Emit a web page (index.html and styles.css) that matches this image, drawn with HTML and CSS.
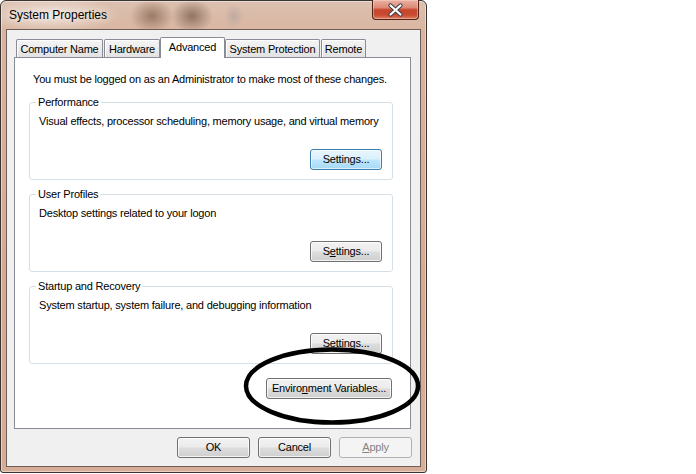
FILE: index.html
```html
<!DOCTYPE html>
<html>
<head>
<meta charset="utf-8">
<link rel="stylesheet" href="styles.css">
</head>
<body>
<div class="window">
  <div class="titlebar">
    <span class="title">System Properties</span>
    <div class="close">
      <svg width="45" height="18" viewBox="0 0 45 18">
        <path d="M17.5 4.5 L27.5 13.5 M27.5 4.5 L17.5 13.5" stroke="#3a3f4a" stroke-width="4.2" stroke-linecap="round"/>
        <path d="M17.5 4.5 L27.5 13.5 M27.5 4.5 L17.5 13.5" stroke="#ffffff" stroke-width="2.2" stroke-linecap="round"/>
      </svg>
    </div>
  </div>
  <div class="client">
    <div class="tabs">
      <div class="tab tab-cn">Computer Name</div>
      <div class="tab tab-hw">Hardware</div>
      <div class="tab tab-adv active">Advanced</div>
      <div class="tab tab-sp">System Protection</div>
      <div class="tab tab-rm">Remote</div>
    </div>
    <div class="panel">
      <p class="intro">You must be logged on as an Administrator to make most of these changes.</p>
      <div class="group first">
        <span class="legend">Performance</span>
        <p class="desc">Visual effects, processor scheduling, memory usage, and virtual memory</p>
        <div class="btnrow"><button class="btn settings focus">Settings...</button></div>
      </div>
      <div class="group">
        <span class="legend">User Profiles</span>
        <p class="desc">Desktop settings related to your logon</p>
        <div class="btnrow"><button class="btn settings">S<u>e</u>ttings...</button></div>
      </div>
      <div class="group">
        <span class="legend">Startup and Recovery</span>
        <p class="desc">System startup, system failure, and debugging information</p>
        <div class="btnrow"><button class="btn settings">Se<u>t</u>tings...</button></div>
      </div>
      <div class="envrow"><button class="btn env">Enviro<u>n</u>ment Variables...</button></div>
    </div>
    <div class="footer">
      <button class="btn foot">OK</button>
      <button class="btn foot">Cancel</button>
      <button class="btn foot disabled"><u>A</u>pply</button>
    </div>
  </div>
  <svg class="circle" width="178" height="80" viewBox="0 0 178 80">
    <ellipse cx="89" cy="40" rx="86" ry="36.5" fill="none" stroke="#000" stroke-width="4.5"/>
  </svg>
</div>
</body>
</html>
```
FILE: styles.css
```css
body {
  margin: 0;
  background: #ffffff;
  font-family: "Liberation Sans", Arial, sans-serif;
  font-size: 11px;
  letter-spacing: -0.2px;
  color: #000;
}

.window {
  position: relative;
  width: 427px;
  height: 473px;
  box-sizing: border-box;
  border: 1px solid #3b3430;
  border-radius: 6px 6px 3px 3px;
  padding: 0 5px 5px 5px;
  display: flex;
  flex-direction: column;
  background:
    radial-gradient(ellipse 70px 18px at 50px 14px, rgba(255,255,255,0.6), rgba(255,255,255,0)),
    radial-gradient(ellipse 22px 17px at 151px 15px, rgba(115,82,62,0.62), rgba(115,82,62,0)),
    radial-gradient(ellipse 21px 17px at 191px 15px, rgba(100,72,55,0.62), rgba(100,72,55,0)),
    radial-gradient(ellipse 10px 12px at 233px 15px, rgba(160,150,150,0.45), rgba(160,150,150,0)),
    linear-gradient(to bottom, #dcc0af 0%, #d8b39e 8%, #d5aa93 60%, #d6ad97 100%);
  box-shadow: inset 0 0 0 1px rgba(255,255,255,0.45);
}

.titlebar {
  height: 28px;
  display: flex;
  justify-content: space-between;
  align-items: flex-start;
}

.title {
  margin: 7px 0 0 3px;
  font-size: 12px;
  letter-spacing: 0;
  line-height: 15px;
  color: #000;
  text-shadow: 0 0 6px rgba(255,255,255,0.9);
}

.close {
  width: 47px;
  height: 20px;
  box-sizing: border-box;
  margin: -1px 2px 0 0;
  border: 1px solid #4f2219;
  border-top: none;
  border-radius: 0 0 4px 4px;
  background: linear-gradient(to bottom, #eab1a2 0%, #dd8a74 40%, #c6462d 52%, #c84a30 78%, #df7d5e 100%);
  box-shadow: inset 0 0 0 1px rgba(255,220,210,0.45);
  display: flex;
  align-items: center;
  justify-content: center;
}

.close svg {
  display: block;
}

.client {
  flex: 1;
  background: #f0f0f0;
  border: 1px solid #6d5f57;
  padding: 7px 9px 0 7px;
  display: flex;
  flex-direction: column;
}

.tabs {
  display: flex;
  align-items: flex-start;
  height: 21px;
  margin: 0 0 -1px 2px;
  position: relative;
  z-index: 1;
}

.tab {
  box-sizing: border-box;
  height: 18px;
  margin-top: 2px;
  margin-right: 1px;
  border: 1px solid #898c95;
  border-bottom: none;
  border-radius: 2px 2px 0 0;
  background: linear-gradient(to bottom, #f4f4f4 0%, #ececec 50%, #e2e2e2 100%);
  box-shadow: inset 1px 1px 0 #ffffff;
  padding-top: 2px;
  line-height: 15px;
  text-align: center;
  white-space: nowrap;
}

.tab-cn { width: 87px; }
.tab-hw { width: 56px; }
.tab-adv { width: 65px; }
.tab-sp { width: 95px; }
.tab-rm { width: 45px; }

.tab.active {
  height: 21px;
  margin-top: 0;
  margin-left: -1px;
  margin-right: 0;
  padding-top: 2px;
  background: #ffffff;
  box-shadow: none;
}

.panel {
  height: 372px;
  box-sizing: border-box;
  background: #ffffff;
  border: 1px solid #898c95;
  padding: 0 17px 0 14px;
  display: flex;
  flex-direction: column;
}

.intro {
  margin: 14px 0 0 4px;
  line-height: 15px;
  white-space: nowrap;
}

.group {
  height: 78px;
  box-sizing: border-box;
  margin-top: 14px;
  border: 1px solid #d5dfe5;
  border-radius: 3px;
  padding: 0 10px 0 9px;
  display: flex;
  flex-direction: column;
}

.group.first {
  margin-top: 15px;
}

.legend {
  align-self: flex-start;
  margin: -8px 0 0 -3px;
  padding: 0 2px;
  background: #ffffff;
  line-height: 15px;
  white-space: nowrap;
}

.desc {
  margin: 4px 0 0 0;
  line-height: 15px;
  white-space: nowrap;
}

.btnrow {
  margin-top: auto;
  margin-bottom: 9px;
  display: flex;
  justify-content: flex-end;
}

.envrow {
  margin: 14px 1px 0 0;
  display: flex;
  justify-content: flex-end;
}

.footer {
  display: flex;
  justify-content: flex-end;
  gap: 8px;
  padding-top: 8px;
  margin-right: -1px;
}

.btn {
  box-sizing: border-box;
  height: 21px;
  padding: 0;
  border: 1px solid #707070;
  border-radius: 3px;
  background: linear-gradient(to bottom, #f2f2f2 0%, #ebebeb 48%, #dddddd 52%, #cfcfcf 100%);
  box-shadow: inset 0 0 0 1px rgba(255,255,255,0.75);
  font-family: inherit;
  font-size: 11px;
  letter-spacing: -0.2px;
  line-height: 17px;
  color: #000;
  white-space: nowrap;
}

.btn u {
  text-underline-offset: 1px;
}

.settings { width: 72px; }
.env { width: 126px; }
.foot { width: 73px; }

.btn.focus {
  border-color: #3c7fb1;
  background: linear-gradient(to bottom, #eaf6fd 0%, #d9f0fc 48%, #bee6fd 52%, #a7d9f5 100%);
  box-shadow: inset 0 0 0 1px rgba(255,255,255,0.6);
}

.btn.disabled {
  border-color: #adb2b5;
  background: #f4f4f4;
  box-shadow: none;
  color: #838383;
}

.circle {
  position: absolute;
  left: 242px;
  top: 345px;
}
```
